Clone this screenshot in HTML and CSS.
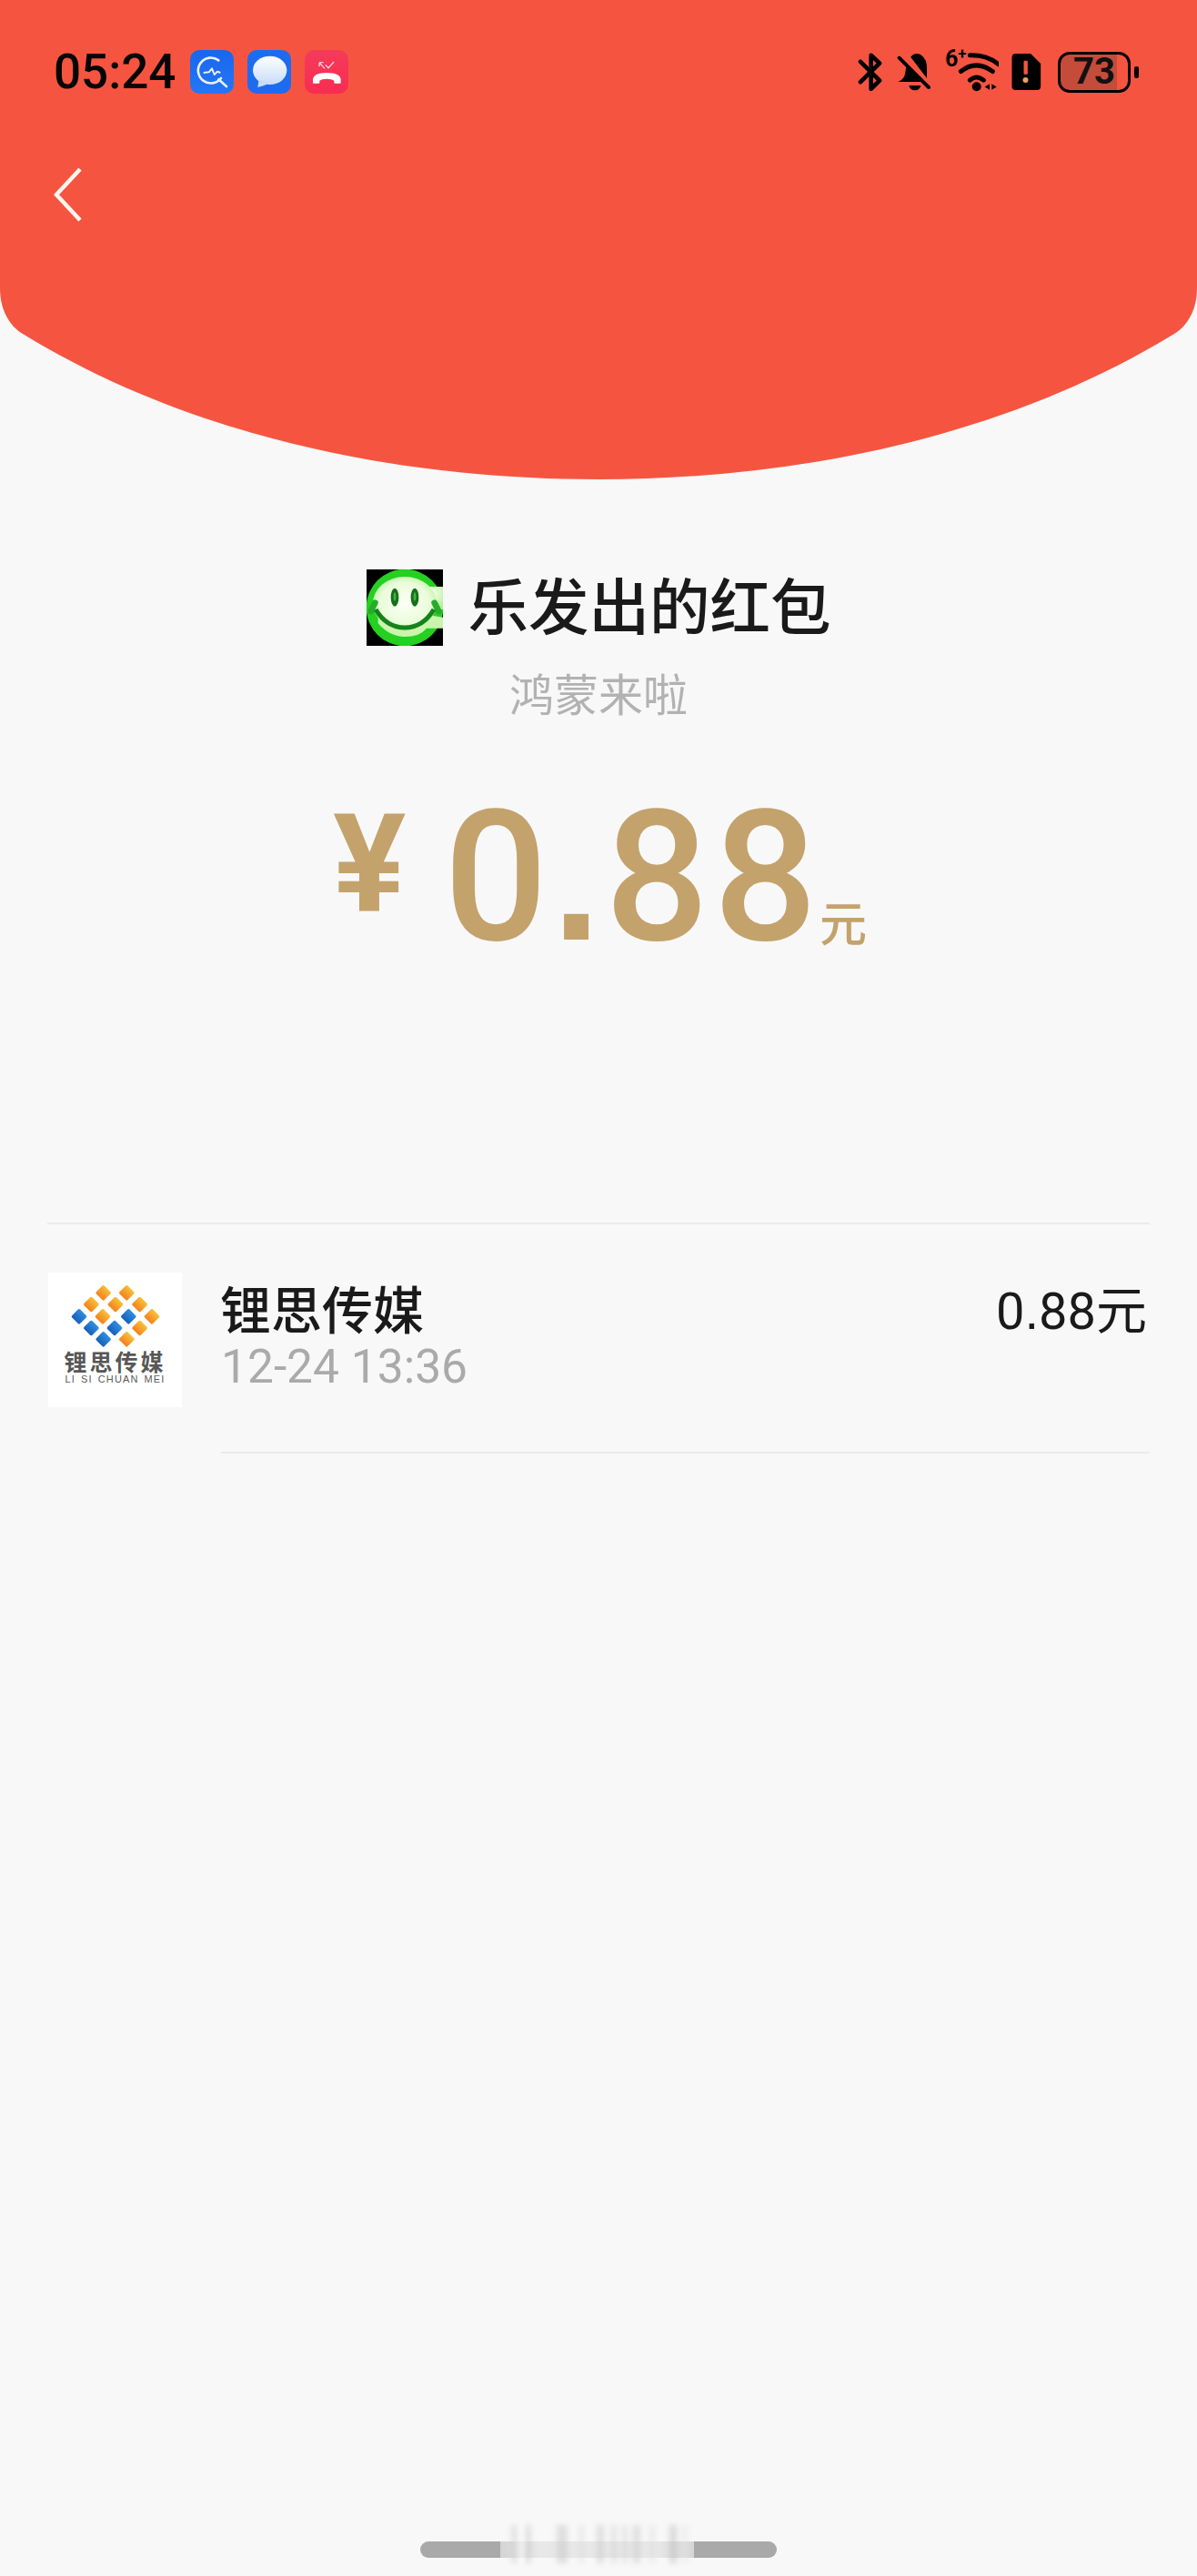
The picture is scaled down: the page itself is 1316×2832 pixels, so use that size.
FILE: index.html
```html
<!DOCTYPE html>
<html lang="zh-CN">
<head>
<meta charset="utf-8">
<title>红包详情</title>
<link rel="stylesheet" href="styles.css">
</head>
<body>
<div class="page">
  <header class="hero">
    <svg class="hero-bg" viewBox="0 0 1316 527" aria-hidden="true"><path d="M0 0H1316V317C1316 340 1306 358 1291 367C1115 475 890 527 658 527C426 527 201 475 25 367C10 358 0 340 0 317Z"/></svg>
    <div class="status">
      <div class="status-left">
        <span class="clock">05:24</span>
        <svg class="app" viewBox="628 165 144 144"><defs><linearGradient id="b1" x1="0" y1="0" x2="0" y2="1"><stop offset="0" stop-color="#1a66ee"/><stop offset="1" stop-color="#2477f5"/></linearGradient></defs><rect x="628" y="165" width="144" height="144" rx="30" fill="url(#b1)"/><path d="M722 199A42 42 0 1 0 730 258" fill="none" stroke="#e6f0ff" stroke-width="8" stroke-linecap="round"/><path d="M722 262L748 285" stroke="#e6f0ff" stroke-width="8" stroke-linecap="round"/><path d="M672 240L690 238L700 226L708 246L718 236L728 240" fill="none" stroke="#e6f0ff" stroke-width="6" stroke-linejoin="round"/></svg>
        <svg class="app" viewBox="816 165 144 144"><defs><linearGradient id="b2" x1="0" y1="0" x2="0" y2="1"><stop offset="0" stop-color="#fff"/><stop offset="1" stop-color="#c8dcf8"/></linearGradient></defs><rect x="816" y="165" width="144" height="144" rx="30" fill="#1d6cf0"/><ellipse cx="890" cy="232" rx="56" ry="47" fill="url(#b2)"/><path d="M854 262L850 288Q870 284 884 276Z" fill="#c8dcf8"/></svg>
        <svg class="app" viewBox="1006 165 144 144"><defs><linearGradient id="b3" x1="0" y1="0" x2="0" y2="1"><stop offset="0" stop-color="#f43b5a"/><stop offset="1" stop-color="#f92c52"/></linearGradient></defs><rect x="1006" y="165" width="144" height="144" rx="30" fill="url(#b3)"/><path d="M1035 273V262Q1038 242 1079 242Q1120 242 1123 262V273H1105V265Q1096 258 1079 258Q1062 258 1053 265V273Z" fill="#fff" stroke="#fff" stroke-width="4" stroke-linejoin="round"/><path d="M1054 206L1072 226M1054 206V220M1054 206H1068M1074 214L1084 224L1102 204" fill="none" stroke="#fbd4da" stroke-width="4"/></svg>
      </div>
      <div class="status-right">
        <svg class="ico bt" viewBox="128 84 84 128"><path d="M137 113L200 175L172 203V165M172 128V92L200 118L137 180" fill="none" stroke="#000" stroke-width="14" stroke-linecap="round" stroke-linejoin="round"/></svg>
        <svg class="ico bell" viewBox="260 84 112 128"><path d="M306 97Q320 80 340 90Q360 104 360 132V168ZM293 128L343 180H264Q286 170 288 150Q288 138 293 128ZM300 192H340Q336 208 320 208Q304 208 300 192Z"/><path d="M268 100L366 198" stroke="#000" stroke-width="12" stroke-linecap="round"/></svg>
        <div class="wifi">
          <span class="wifi-gen">6<sup>+</sup></span>
          <svg class="ico wifi-ico" viewBox="450 84 135 128"><path d="M490 92Q545 90 585 122M460 145Q510 105 565 145M490 174Q512 155 535 174" fill="none" stroke="#000" stroke-width="15" stroke-linecap="round"/><circle cx="512" cy="195" r="15"/><path d="M555 186V206L539 196ZM562 186V206L578 196Z"/></svg>
        </div>
        <svg class="ico sim" viewBox="638 87 96 120"><path d="M650 87H700L733 120V195Q733 207 720 207H650Q638 207 638 195V100Q638 87 650 87Z"/><rect x="677" y="110" width="13" height="45" rx="3" fill="#f55540"/><circle cx="683" cy="174" r="9" fill="#e9a06a"/></svg>
        <div class="battery"><span class="battery-num">73</span></div>
      </div>
    </div>
    <nav class="nav">
      <svg class="back" viewBox="0 0 32 60"><path d="M29 2L3 30L29 58" fill="none" stroke="#fff6f0" stroke-width="4.5"/></svg>
    </nav>
  </header>

  <section class="summary">
    <div class="sender">
      <svg class="avatar" viewBox="24 18 252 252" preserveAspectRatio="none" aria-hidden="true">
        <defs>
          <radialGradient id="face" cx=".5" cy=".5" r=".6"><stop offset="0" stop-color="#fdfff6"/><stop offset=".65" stop-color="#eafcda"/><stop offset="1" stop-color="#b2f098"/></radialGradient>
        </defs>
        <rect x="24" y="18" width="252" height="252" fill="#000"/>
        <circle cx="150" cy="144" r="127" fill="#25d021"/>
        <path d="M50 110Q95 48 160 48Q205 50 232 75H276V150H44Z" fill="url(#face)"/>
        <ellipse cx="150" cy="130" rx="105" ry="88" fill="url(#face)"/>
        <path d="M62 196Q100 240 150 240Q200 240 222 212H276V176L240 170L150 220L62 170Z" fill="#c9f5ac"/>
        <path d="M52 128L38 156M248 128L262 156" stroke="#27ab2a" stroke-width="20" stroke-linecap="round"/>
        <path d="M54 150Q90 210 150 210Q210 210 246 150" fill="none" stroke="#17821c" stroke-width="15"/>
        <ellipse cx="117" cy="110" rx="13" ry="30" fill="#127218"/>
        <ellipse cx="183" cy="110" rx="13" ry="30" fill="#127218"/>
        <ellipse cx="117" cy="108" rx="4" ry="14" fill="#4faa48"/>
        <ellipse cx="183" cy="108" rx="4" ry="14" fill="#4faa48"/>
      </svg>
      <h1 class="sender-name">乐发出的红包</h1>
    </div>
    <p class="wish">鸿蒙来啦</p>
    <div class="amount">
      <span class="amount-yen">¥</span>
      <span class="amount-num">0<span class="sq-dot">.</span>88</span>
      <span class="amount-unit">元</span>
    </div>
  </section>

  <section class="list">
    <div class="row">
      <div class="logo">
        <svg class="logo-mark" viewBox="120 235 330 225" aria-hidden="true">
          <defs>
            <linearGradient id="org" x1="0" y1="0" x2="0" y2="1"><stop offset="0" stop-color="#f7c13a"/><stop offset="1" stop-color="#f5801c"/></linearGradient>
            <linearGradient id="blu" x1="0" y1="0" x2="0" y2="1"><stop offset="0" stop-color="#2f8fe0"/><stop offset="1" stop-color="#1a5fb8"/></linearGradient>
          </defs>
          <g fill="url(#org)">
            <rect x="-19" y="-19" width="38" height="38" rx="5" transform="translate(245 272) rotate(45)"/>
            <rect x="-19" y="-19" width="38" height="38" rx="5" transform="translate(322 272) rotate(45)"/>
            <rect x="-19" y="-19" width="38" height="38" rx="5" transform="translate(205 310) rotate(45)"/>
            <rect x="-19" y="-19" width="38" height="38" rx="5" transform="translate(285 310) rotate(45)"/>
            <rect x="-19" y="-19" width="38" height="38" rx="5" transform="translate(365 310) rotate(45)"/>
            <rect x="-19" y="-19" width="38" height="38" rx="5" transform="translate(243 350) rotate(45)"/>
            <rect x="-19" y="-19" width="38" height="38" rx="5" transform="translate(405 350) rotate(45)"/>
            <rect x="-19" y="-19" width="38" height="38" rx="5" transform="translate(365 388) rotate(45)"/>
            <rect x="-19" y="-19" width="38" height="38" rx="5" transform="translate(322 425) rotate(45)"/>
          </g>
          <g fill="url(#blu)">
            <rect x="-19" y="-19" width="38" height="38" rx="5" transform="translate(165 350) rotate(45)"/>
            <rect x="-19" y="-19" width="38" height="38" rx="5" transform="translate(328 350) rotate(45)"/>
            <rect x="-19" y="-19" width="38" height="38" rx="5" transform="translate(205 388) rotate(45)"/>
            <rect x="-19" y="-19" width="38" height="38" rx="5" transform="translate(282 388) rotate(45)"/>
            <rect x="-19" y="-19" width="38" height="38" rx="5" transform="translate(245 425) rotate(45)"/>
          </g>
        </svg>
        <span class="logo-cn">锂思传媒</span>
        <span class="logo-en">LI SI CHUAN MEI</span>
      </div>
      <div class="row-body">
        <div class="row-top">
          <span class="row-name">锂思传媒</span>
          <span class="row-money">0<span class="sq-dot-sm">.</span>88元</span>
        </div>
        <div class="row-time">12-24 13:36</div>
      </div>
    </div>
  </section>

  <div class="home">
    <div class="home-bar">
      <div class="home-band"></div>
      <div class="home-ghost"></div>
    </div>
  </div>
</div>
</body>
</html>
```
FILE: styles.css
```css
* { box-sizing: border-box; }
html, body { margin: 0; padding: 0; }
body { background: #f8f8f9; font-family: "Noto Sans CJK SC", Roboto, sans-serif; color: #1a1a1a; }
.page { width: 1316px; height: 2832px; display: flex; flex-direction: column; overflow: hidden; }

.hero { position: relative; height: 527px; flex: none; padding-top: 55px; }
.hero-bg { position: absolute; inset: 0; width: 1316px; height: 527px; display: block; fill: #f55540; }
.status { position: relative; display: flex; justify-content: space-between; align-items: center; height: 48px; padding: 0 64px 0 59px; }
.status-left { display: flex; align-items: center; }
.clock { font: 500 53px/48px Roboto, sans-serif; color: #050505; width: 150px; }
.app { width: 48px; height: 48px; margin-right: 15px; display: block; }
.status-right { display: flex; align-items: center; }
.ico { display: block; fill: #000; }
.bt { width: 28px; height: 43px; margin-right: 15px; }
.bell { width: 37px; height: 43px; margin-right: 16px; }
.wifi { display: flex; align-items: flex-end; margin-right: 14px; position: relative; }
.wifi-gen { font: 700 25px/26px Roboto, sans-serif; color: #000; width: 14px; align-self: flex-start; margin-top: -6px; white-space: nowrap; }
.wifi-gen sup { font-size: 17px; line-height: 0; vertical-align: 8px; }
.wifi-ico { width: 45px; height: 43px; }
.sim { width: 33px; height: 40px; margin-right: 18px; }
.battery { position: relative; width: 80px; height: 45px; border: 3.5px solid #000; border-radius: 13px; background: linear-gradient(90deg, #c54c3b 0 62px, transparent 62px); display: flex; align-items: center; justify-content: center; margin-right: 9px; }
.battery::after { content: ""; position: absolute; left: 81px; top: 13px; width: 5px; height: 13px; background: #000; border-radius: 2px; }
.battery-num { font: 700 40px/38px Roboto, sans-serif; color: #111; }
.nav { position: relative; padding: 81px 0 0 59px; }
.back { display: block; width: 32px; height: 60px; }

.summary { display: flex; flex-direction: column; align-items: center; padding-top: 99px; flex: none; }
.sender { display: flex; align-items: center; height: 84px; }
.avatar { width: 84px; height: 84px; display: block; margin-right: 28px; }
.sender-name { margin: 0 0 10px; font: 500 66.5px/78px "Noto Sans CJK SC", sans-serif; color: #1a1a1a; white-space: nowrap; }
.wish { margin: 21px 0 0; font: 400 49px/60px "Noto Sans CJK SC", sans-serif; color: #b2b2b2; }
.amount { display: flex; align-items: flex-end; height: 200px; margin-top: 76px; color: #c4a26c; width: 584px; }
.amount-yen { font: 700 150px/150px Roboto, sans-serif; margin-bottom: 41px; width: 122px; flex: none; }
.amount-num { font: 500 201px/200px Roboto, sans-serif; letter-spacing: 5px; flex: none; width: 413px; white-space: nowrap; margin-bottom: 0; }
.sq-dot { font-family: "Liberation Sans", sans-serif; font-weight: 700; font-size: 190px; }
.sq-dot-sm { font-family: "Liberation Sans", sans-serif; }
.amount-unit { font: 500 52px/60px "Noto Sans CJK SC", sans-serif; margin-bottom: 24px; flex: none; }

.list { margin: 277px 52px 0; border-top: 2px solid #ebebeb; flex: none; }
.row { display: flex; align-items: flex-start; }
.logo { width: 147px; height: 148px; margin: 53px 0 0 1px; background: #fff; display: flex; flex-direction: column; align-items: center; flex: none; padding-top: 10px; }
.logo-mark { width: 110px; height: 75px; display: block; }
.logo-cn { font: 700 25px/22px "Noto Sans CJK SC", sans-serif; letter-spacing: 3px; color: #575757; margin-top: 1px; white-space: nowrap; }
.logo-en { font: 400 11px/13px "Liberation Sans", sans-serif; color: #5a5a5a; letter-spacing: 1.1px; word-spacing: 2px; white-space: nowrap; margin-top: 3px; }
.row-body { flex: 1; margin-left: 43px; padding: 61px 3px 63px 0; border-bottom: 2px solid #ebebeb; }
.row-top { display: flex; justify-content: space-between; align-items: center; height: 66px; }
.row-name { font: 500 56px/66px "Noto Sans CJK SC", sans-serif; color: #1a1a1a; margin-bottom: 6px; margin-left: -1px; }
.row-money { font: 400 56px/66px Roboto, "Noto Sans CJK SC", sans-serif; color: #1a1a1a; margin-top: 4px; }
.row-time { font: 400 51.5px/60px Roboto, sans-serif; color: #aaaaaa; }

.home { margin-top: auto; padding-bottom: 20px; display: flex; justify-content: center; flex: none; }
.home-bar { position: relative; width: 392px; height: 18px; border-radius: 9px; background: #a9a9a9; }
.home-band { position: absolute; left: 88px; width: 213px; top: 0; height: 18px; background: linear-gradient(90deg, #d4d4d4, #e8e8e8 20%, #e8e8e8 80%, #d6d6d6); }
.home-ghost { position: absolute; left: 88px; width: 213px; top: -18px; height: 42px; filter: blur(3px); opacity: .55; background: linear-gradient(90deg, transparent 0 12px, #cfcfcf 12px 19px, #fff 19px 28px, #bcbcbc 28px 33px, transparent 33px 62px, #c9c9c9 62px 74px, transparent 74px 86px, #dcdcdc 86px 92px, transparent 92px 106px, #c9c9c9 106px 114px, transparent 114px 122px, #d0d0d0 122px 128px, transparent 128px 134px, #d4d4d4 134px 140px, transparent 140px 146px, #c9c9c9 146px 154px, transparent 154px 164px, #dedede 164px 170px, transparent 170px 186px, #bfbfbf 186px 194px, transparent 194px 200px, #e4e4e4 200px 206px, transparent 206px); }
```
